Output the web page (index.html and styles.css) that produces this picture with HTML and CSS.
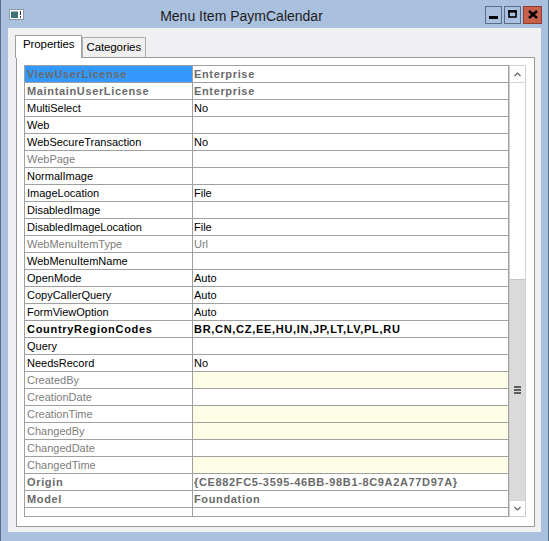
FILE: index.html
```html
<!DOCTYPE html>
<html lang="en">
  <head>
    <meta charset="UTF-8" />
    <title>Menu Item PaymCalendar</title>
    <link rel="stylesheet" href="styles.css">
  </head>
  <body>
    <div class="window">
      <div class="titlebar">
        <svg class="appicon" width="15" height="11" viewBox="0 0 15 11">
          <rect x="0.5" y="0.5" width="14" height="10" fill="#fff" stroke="#8a96a4" />
          <rect x="2" y="3" width="7" height="6" fill="#3f6f74" />
          <rect x="2" y="2" width="7" height="1" fill="#9fb6c9" />
          <rect x="11" y="2" width="1" height="4" fill="#2b3a4a" />
          <rect x="11" y="7" width="1" height="2" fill="#2b3a4a" />
        </svg>
        <div class="title">Menu Item PaymCalendar</div>
        <div class="buttons">
          <div class="btn">
            <svg width="17" height="18" viewBox="0 0 17 18"><rect x="4" y="10" width="9" height="3" fill="#000" /></svg>
          </div>
          <div class="btn">
            <svg width="17" height="18" viewBox="0 0 17 18"><rect x="5" y="5" width="7" height="6" fill="none" stroke="#000" stroke-width="1.6" /><rect x="4.2" y="4.2" width="8.6" height="2.4" fill="#000" /></svg>
          </div>
          <div class="btn close">
            <svg width="18" height="18" viewBox="0 0 18 18"><path d="M5 5 L13 12 M13 5 L5 12" stroke="#000" stroke-width="2.4" /></svg>
          </div>
        </div>
      </div>

      <div class="client">
        <div class="tabs">
          <div class="tab active">Properties</div>
          <div class="tab">Categories</div>
        </div>
        <div class="panel">
          <div class="grid">
            <div class="props">
              <div class="row"><div class="name selected strong">ViewUserLicense</div><div class="value strong">Enterprise</div></div>
              <div class="row"><div class="name strong">MaintainUserLicense</div><div class="value strong">Enterprise</div></div>
              <div class="row"><div class="name">MultiSelect</div><div class="value">No</div></div>
              <div class="row"><div class="name">Web</div><div class="value"></div></div>
              <div class="row"><div class="name">WebSecureTransaction</div><div class="value">No</div></div>
              <div class="row"><div class="name dim">WebPage</div><div class="value"></div></div>
              <div class="row"><div class="name">NormalImage</div><div class="value"></div></div>
              <div class="row"><div class="name">ImageLocation</div><div class="value">File</div></div>
              <div class="row"><div class="name">DisabledImage</div><div class="value"></div></div>
              <div class="row"><div class="name">DisabledImageLocation</div><div class="value">File</div></div>
              <div class="row"><div class="name dim">WebMenuItemType</div><div class="value dim">Url</div></div>
              <div class="row"><div class="name">WebMenuItemName</div><div class="value"></div></div>
              <div class="row"><div class="name">OpenMode</div><div class="value">Auto</div></div>
              <div class="row"><div class="name">CopyCallerQuery</div><div class="value">Auto</div></div>
              <div class="row"><div class="name">FormViewOption</div><div class="value">Auto</div></div>
              <div class="row"><div class="name bold">CountryRegionCodes</div><div class="value bold">BR,CN,CZ,EE,HU,IN,JP,LT,LV,PL,RU</div></div>
              <div class="row"><div class="name">Query</div><div class="value"></div></div>
              <div class="row"><div class="name">NeedsRecord</div><div class="value">No</div></div>
              <div class="row"><div class="name dim">CreatedBy</div><div class="value readonly"></div></div>
              <div class="row"><div class="name dim">CreationDate</div><div class="value"></div></div>
              <div class="row"><div class="name dim">CreationTime</div><div class="value readonly"></div></div>
              <div class="row"><div class="name dim">ChangedBy</div><div class="value readonly"></div></div>
              <div class="row"><div class="name dim">ChangedDate</div><div class="value"></div></div>
              <div class="row"><div class="name dim">ChangedTime</div><div class="value readonly"></div></div>
              <div class="row"><div class="name strong">Origin</div><div class="value strong">{CE882FC5-3595-46BB-98B1-8C9A2A77D97A}</div></div>
              <div class="row"><div class="name strong">Model</div><div class="value strong">Foundation</div></div>
              <div class="row"><div class="name"></div><div class="value"></div></div>
            </div>
            <div class="scrollbar">
              <div class="arrow">
                <svg width="15" height="16" viewBox="0 0 15 16"><path d="M4.5 10 L7.5 7 L10.5 10" fill="none" stroke="#606060" stroke-width="1.2" /></svg>
              </div>
              <div class="track"></div>
              <div class="thumb">
                <div class="grip"><span></span><span></span><span></span></div>
              </div>
              <div class="arrow down">
                <svg width="15" height="16" viewBox="0 0 15 16"><path d="M4.5 6 L7.5 9 L10.5 6" fill="none" stroke="#606060" stroke-width="1.2" /></svg>
              </div>
            </div>
          </div>
        </div>
      </div>
    </div>
  </body>
</html>
```

FILE: styles.css
```css
* {
  box-sizing: border-box;
  margin: 0;
  padding: 0;
}

body {
  width: 549px;
  height: 541px;
  overflow: hidden;
  font-family: "Liberation Sans", Arial, sans-serif;
}

.window {
  width: 549px;
  height: 541px;
  background-color: #aac0df;
  border-left: 1px solid #5d7088;
  border-right: 1px solid #5d7088;
}

/* title bar */

.titlebar {
  height: 28px;
  display: flex;
  align-items: flex-start;
}

.appicon {
  margin: 9px 0 0 8px;
}

.title {
  flex: 1;
  text-align: center;
  font-size: 14px;
  line-height: 28px;
  padding: 2px 26px 0 0;
  color: #1c1c1c;
}

.buttons {
  display: flex;
  gap: 2px;
  margin: 6px 6px 0 0;
}

.btn {
  width: 17px;
  height: 18px;
  border: 1px solid #5a6e8a;
  background-color: #aac0df;
  display: flex;
  align-items: center;
  justify-content: center;
}

.btn svg {
  flex: none;
}

.btn.close {
  width: 19px;
  background-color: #c9604c;
  border-color: #8e3e30;
}

/* client area */

.client {
  margin: 0 7px 0 7px;
  height: 504px;
  background-color: #f0f0f2;
  padding-top: 7px;
}

.tabs {
  display: flex;
  align-items: flex-end;
  height: 22px;
  padding-left: 7px;
  position: relative;
  z-index: 1;
}

.tab {
  font-size: 11.5px;
  letter-spacing: -0.1px;
  height: 20px;
  line-height: 19px;
  padding: 0 4px 0 3px;
  border: 1px solid #adadad;
  border-bottom: none;
  background-color: #f0f0f0;
  color: #000;
}

.tab.active {
  height: 23px;
  line-height: 17px;
  padding: 0 7px 0 7px;
  background-color: #fff;
  margin-bottom: -1px;
  border-color: #a0a0a0;
}

.panel {
  margin-left: 8px;
  width: 519px;
  height: 470px;
  border: 1px solid #999;
  background-color: #fff;
  padding: 7px 0 0 7px;
}

.grid {
  display: flex;
  height: 452px;
}

/* property grid */

.props {
  width: 485px;
  height: 452px;
  border: 1px solid #a0a0a0;
  overflow: hidden;
  font-size: 11px;
}

.row {
  display: flex;
  height: 17px;
  border-bottom: 1px solid #a0a0a0;
}

.name,
.value {
  line-height: 16px;
  white-space: nowrap;
  overflow: hidden;
  color: #000;
}

.name {
  width: 168px;
  flex: none;
  border-right: 1px solid #a0a0a0;
  padding: 0 2px;
}

.value {
  flex: 1;
  padding: 0 1px;
}

.selected {
  background-color: #3399ff;
}

.strong {
  font-weight: bold;
  color: #6a6a6a;
  letter-spacing: 0.65px;
}

.bold {
  font-weight: bold;
  letter-spacing: 0.7px;
}

.dim {
  color: #7d7d7d;
}

.readonly {
  background-color: #fefde6;
}

/* scrollbar */

.scrollbar {
  width: 17px;
  height: 452px;
  border: 1px solid #d0d0d0;
  display: flex;
  flex-direction: column;
  background-color: #fff;
}

.arrow {
  height: 17px;
  border-bottom: 1px solid #d6d6d6;
  display: flex;
  align-items: center;
  justify-content: center;
}

.arrow.down {
  border-bottom: none;
  border-top: 1px solid #d6d6d6;
  height: 16px;
}

.track {
  height: 196px;
}

.thumb {
  flex: 1;
  background-color: #dadada;
  border-top: 1px solid #c4c4c4;
  display: flex;
  flex-direction: column;
  justify-content: center;
  align-items: center;
}

.grip {
  display: flex;
  flex-direction: column;
  gap: 1px;
}

.grip span {
  display: block;
  width: 7px;
  height: 2px;
  background-color: #5e5e5e;
}
```
